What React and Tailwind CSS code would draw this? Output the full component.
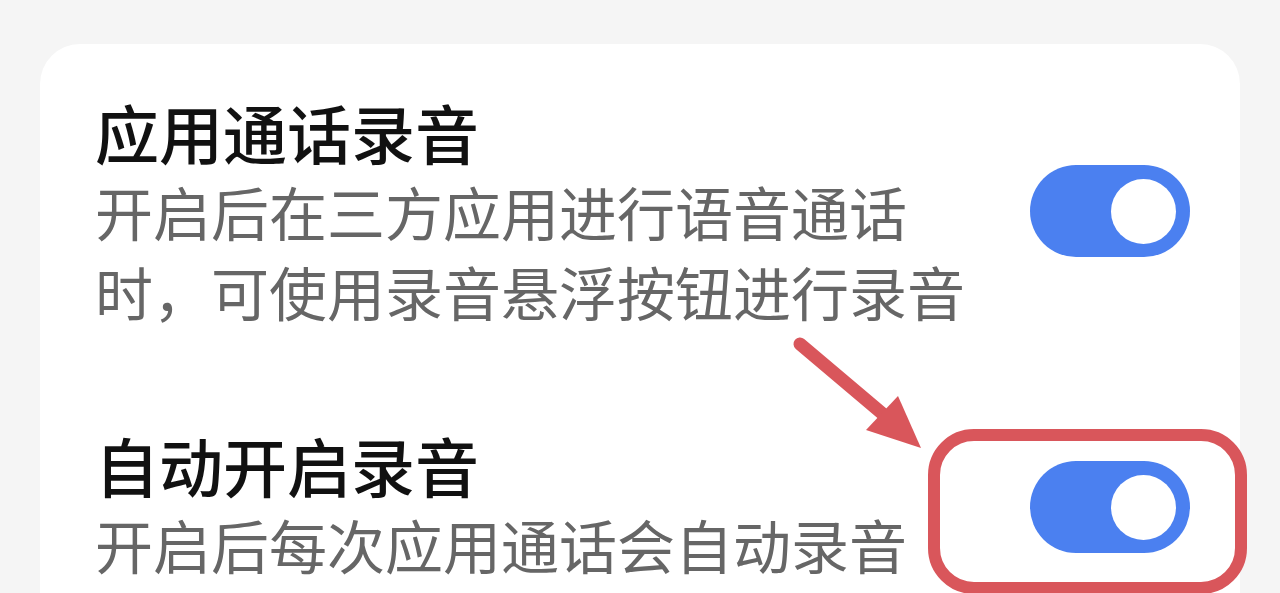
import React from 'react';

const Toggle = ({ children }) => (
  <div className="relative shrink-0">
    <div className="w-[160px] h-[92px] rounded-full bg-[#4b80f0] flex items-center justify-end pr-[14px]">
      <div className="w-[65px] h-[65px] rounded-full bg-white" />
    </div>
    {children}
  </div>
);

const Highlight = () => (
  <>
    <div className="absolute left-[-102px] top-[-32px] w-[319px] h-[165px] border-[12px] border-[#d9565b] rounded-[46px] pointer-events-none" />
    <svg
      className="absolute left-[-240px] top-[-130px] pointer-events-none"
      width="140"
      height="130"
      viewBox="0 0 140 130"
    >
      <line x1="10" y1="13" x2="94" y2="84" stroke="#d9565b" strokeWidth="13" strokeLinecap="round" />
      <polygon points="76,99 108,65 131,117" fill="#d9565b" />
    </svg>
  </>
);

const Row = ({ title, desc, highlight, toggleClass }) => (
  <div className="flex items-center justify-between">
    <div className="w-[900px]">
      <div className="text-[64px] leading-[80px] font-medium text-[#111]">{title}</div>
      <p className="text-[58px] leading-[80px] text-[#666]">{desc}</p>
    </div>
    <div className={toggleClass}>
      <Toggle>{highlight && <Highlight />}</Toggle>
    </div>
  </div>
);

export default function App() {
  return (
    <div
      className="h-[593px] overflow-hidden bg-[#f5f5f5] px-[40px] pt-[44px]"
      style={{ fontFamily: '"Noto Sans CJK SC", "Noto Sans", sans-serif' }}
    >
      <div className="bg-white rounded-t-[40px] pl-[55px] pr-[50px] pt-[47px] min-h-[600px]">
        <Row title="应用通话录音" desc="开启后在三方应用进行语音通话时，可使用录音悬浮按钮进行录音" />
        <div className="mt-[93px]">
          <Row title="自动开启录音" desc="开启后每次应用通话会自动录音" highlight toggleClass="mt-[6px]" />
        </div>
      </div>
    </div>
  );
}
